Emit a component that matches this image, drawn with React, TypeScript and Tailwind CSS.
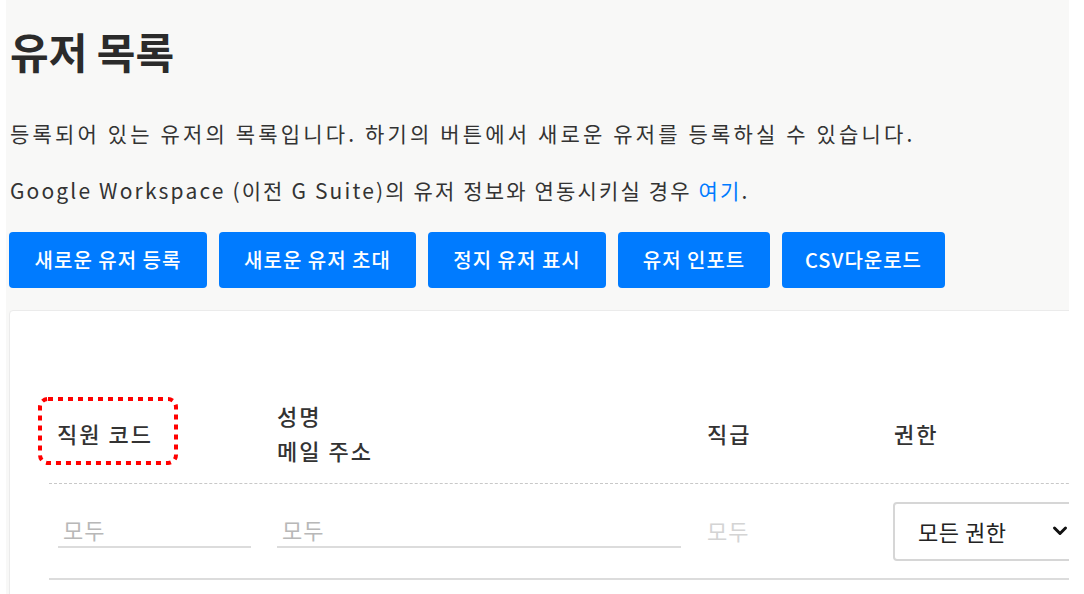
import React from "react";

const font = { fontFamily: '"Noto Sans CJK KR", "Noto Sans", sans-serif' };

function Btn({ label, w }: { label: string; w: string }) {
  return (
    <button
      className={`h-[56px] ${w} rounded-[4px] bg-[#007bff] text-white text-[20px] tracking-[1px] font-medium flex items-center justify-center`}
    >
      {label}
    </button>
  );
}

export default function App() {
  return (
    <div className="w-[1084px] h-[594px] bg-white overflow-hidden pl-[6px]" style={font}>
      <div className="w-[1063px] h-[594px] bg-[#f8f8f7] overflow-hidden pl-[3px]">
        <h1 className="pt-[26px] pl-[1px] text-[42px] leading-[50px] font-bold text-[#2b2b2b]">유저 목록</h1>
        <p className="mt-[42px] pl-[1px] text-[21px] tracking-[3.15px] leading-[30px] text-[#333]">
          등록되어 있는 유저의 목록입니다. 하기의 버튼에서 새로운 유저를 등록하실 수 있습니다.
        </p>
        <p className="mt-[27px] pl-[1px] text-[21px] tracking-[2.15px] leading-[30px] text-[#333]">
          Google Workspace (이전 G Suite)의 유저 정보와 연동시키실 경우{" "}
          <span className="text-[#007bff]">여기</span>.
        </p>
        <div className="mt-[27px] flex gap-[12px] pl-[0px]">
          <Btn label="새로운 유저 등록" w="w-[198px]" />
          <Btn label="새로운 유저 초대" w="w-[197px]" />
          <Btn label="정지 유저 표시" w="w-[178px]" />
          <Btn label="유저 인포트" w="w-[152px]" />
          <Btn label="CSV다운로드" w="w-[163px]" />
        </div>
        <div className="mt-[22px] w-[1200px] h-[400px] bg-white border border-[#ebebeb] rounded-[4px] pl-[39px] pt-[87px]">
          <div className="w-[1100px]">
            <div className="flex items-center border-b border-dashed border-[#c8c8c8] pb-[15px] text-[22px] tracking-[2px] leading-[35px] text-[#333] font-medium">
              <div className="w-[220px] pl-[8px] relative">
                <span>직원 코드</span>
                <svg className="absolute left-[-11px] top-[-19px]" width="140" height="68" viewBox="0 0 140 68">
                  <rect x="2" y="2" width="136" height="64" rx="8" ry="8" fill="none" stroke="#ff0000" strokeWidth="4" strokeDasharray="5 5" />
                </svg>
              </div>
              <div className="w-[430px] pl-[8px]">
                <div>성명</div>
                <div>메일 주소</div>
              </div>
              <div className="w-[187px] pl-[8px]">직급</div>
              <div className="flex-1 pl-[8px]">권한</div>
            </div>
            <div className="flex items-center h-[96px] border-b-2 border-[#dcdcdc]">
              <div className="w-[220px] pl-[9px]">
                <div className="w-[193px] border-b-2 border-[#dcdcdc] pl-[5px] pb-[2px] text-[22px] tracking-[1px] leading-[30px] text-[#b8b8b8]">모두</div>
              </div>
              <div className="w-[430px] pl-[8px]">
                <div className="w-[404px] border-b-2 border-[#dcdcdc] pl-[5px] pb-[2px] text-[22px] tracking-[1px] leading-[30px] text-[#b8b8b8]">모두</div>
              </div>
              <div className="w-[187px] pl-[8px]">
                <div className="text-[22px] tracking-[1px] leading-[30px] text-[#d4d4d4] pb-[2px]">모두</div>
              </div>
              <div className="flex-1 pl-[7px]">
                <div className="w-[250px] h-[59px] border-2 border-[#d6d6d6] rounded-[4px] flex items-center pl-[23px] text-[22px] tracking-[0.5px] text-[#222]">
                  <span>모든 권한</span>
                  <svg className="ml-[46px]" width="16" height="12" viewBox="0 0 16 12">
                    <path d="M2.5 3 L8 8.5 L13.5 3" fill="none" stroke="#111" strokeWidth="3" strokeLinecap="round" strokeLinejoin="round" />
                  </svg>
                </div>
              </div>
            </div>
          </div>
        </div>
      </div>
    </div>
  );
}
